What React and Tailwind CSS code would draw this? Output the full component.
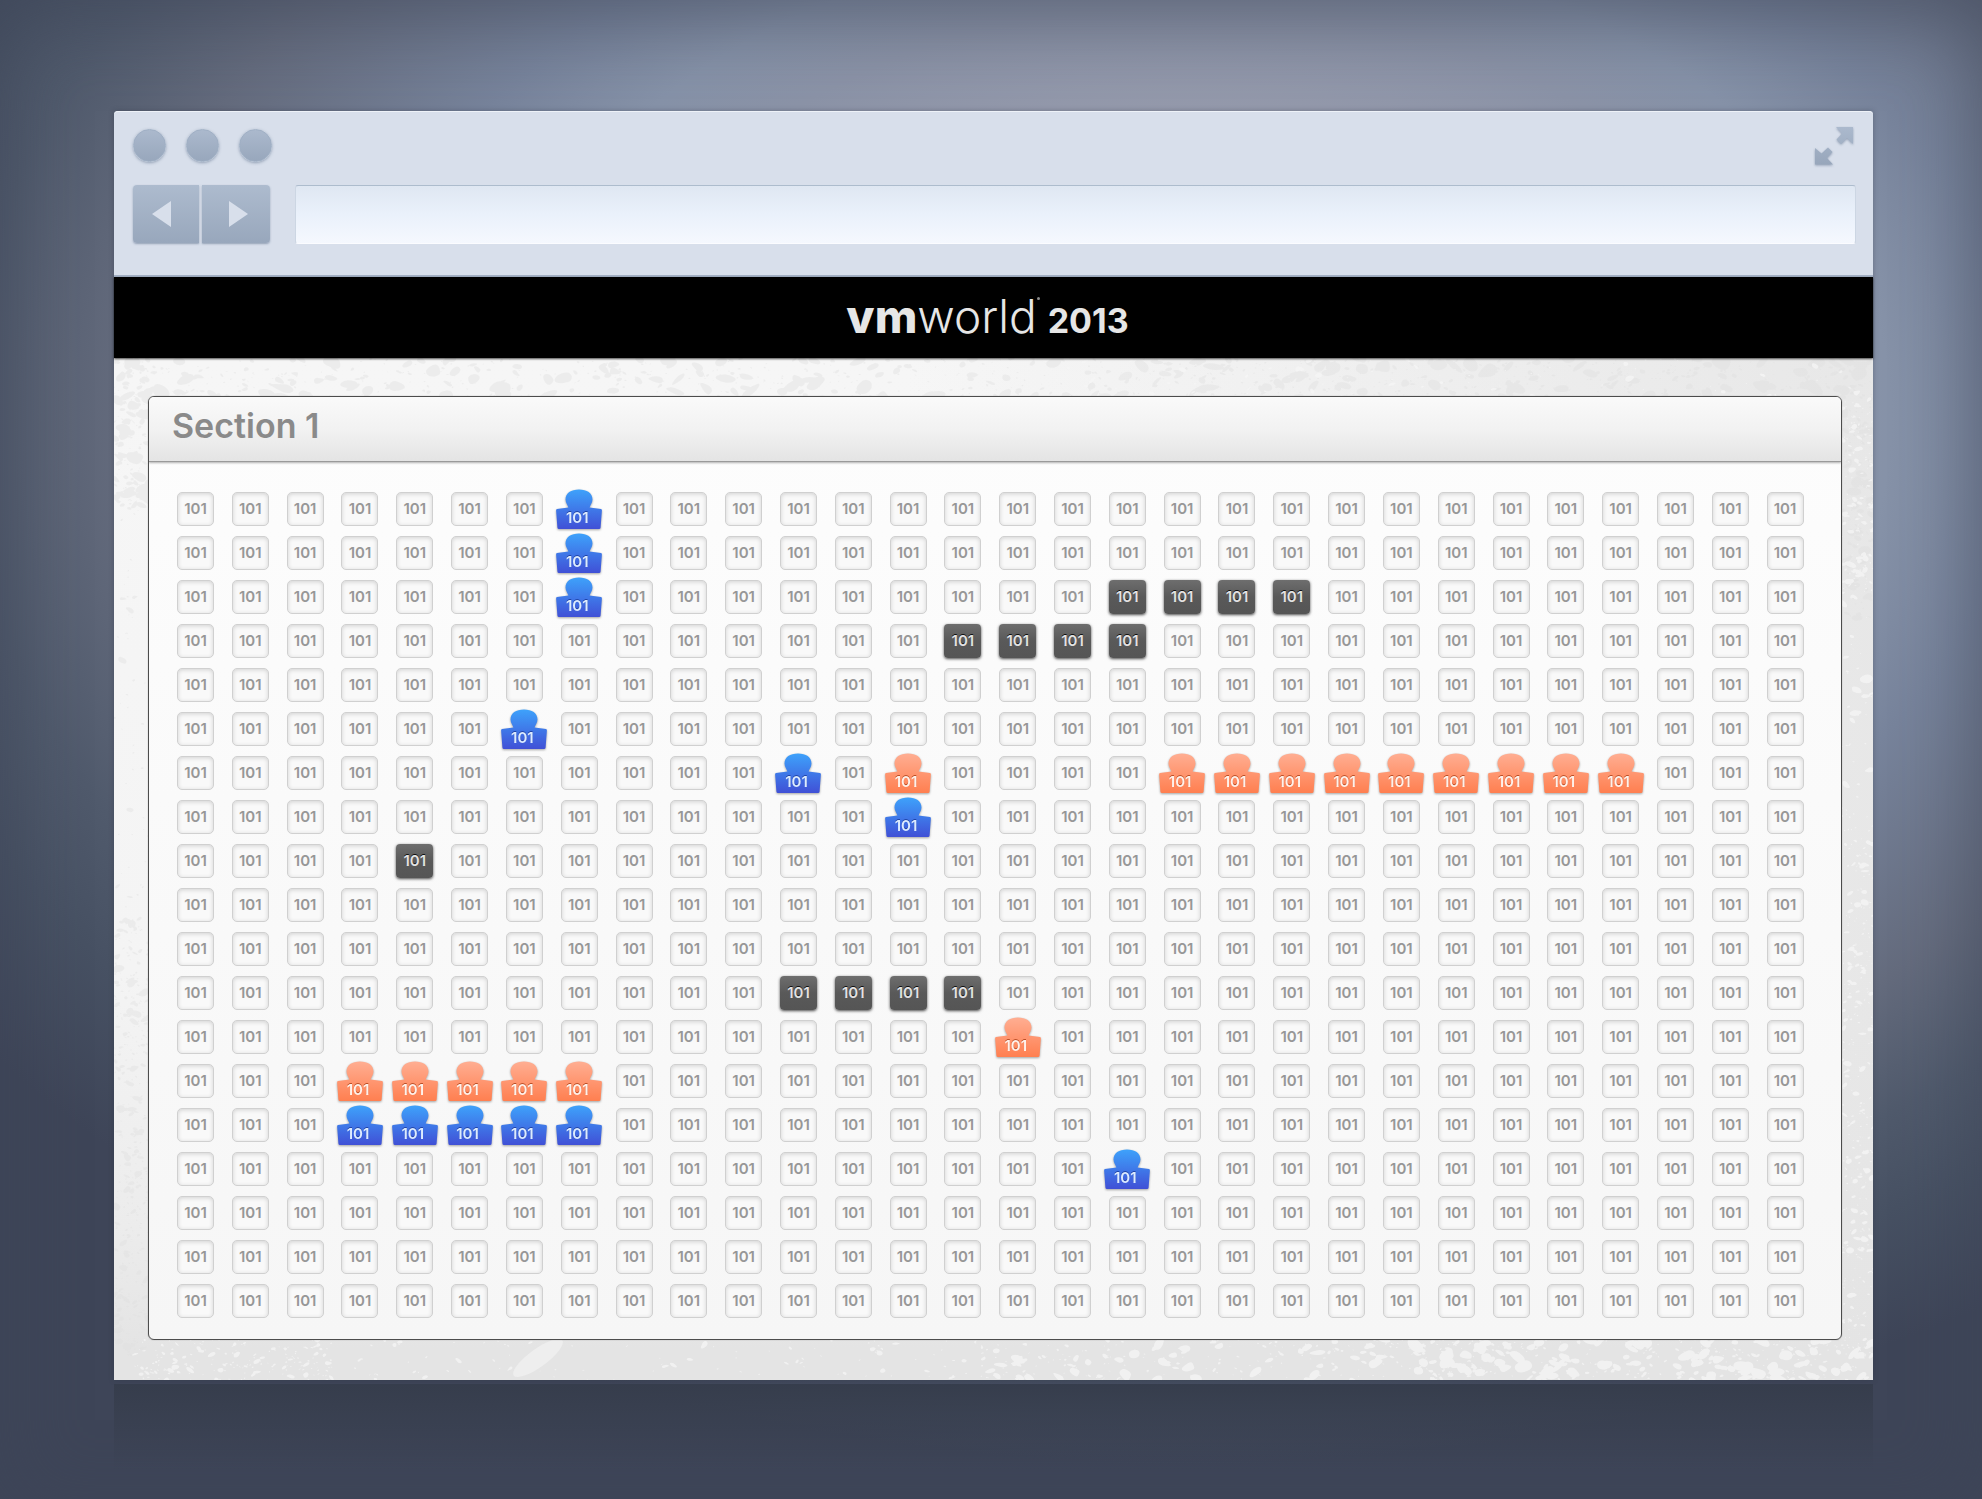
const COLS = 30;
const ROWS = 19;

const PLACED = {};
function place(kind, row, cols) {
  cols.forEach((c) => {
    PLACED[row + "-" + c] = kind;
  });
}
place("mine", 0, [7]);
place("mine", 1, [7]);
place("mine", 2, [7]);
place("blocked", 2, [17, 18, 19, 20]);
place("blocked", 3, [14, 15, 16, 17]);
place("mine", 5, [6]);
place("mine", 6, [11]);
place("taken", 6, [13, 18, 19, 20, 21, 22, 23, 24, 25, 26]);
place("mine", 7, [13]);
place("blocked", 8, [4]);
place("blocked", 11, [11, 12, 13, 14]);
place("taken", 12, [15]);
place("taken", 13, [3, 4, 5, 6, 7]);
place("mine", 14, [3, 4, 5, 6, 7]);
place("mine", 15, [17]);

function makeRandom(seed) {
  let s = seed;
  return () => {
    s = (s * 16807) % 2147483647;
    return s / 2147483647;
  };
}

// Irregular stone chips scattered in the margin around the panel.
function makeChips() {
  const rnd = makeRandom(4127);
  const light = [];
  const dark = [];
  const add = (list, x, y, size) => {
    const turn = (rnd() - 0.5) * 1.6;
    const flat = 0.35 + rnd() * 0.4;
    const n = 6;
    const pts = [];
    for (let i = 0; i < n; i++) {
      const a = (i / n) * Math.PI * 2;
      const r = size * (0.6 + rnd() * 0.6);
      const px = Math.cos(a) * r;
      const py = Math.sin(a) * r * flat;
      pts.push([
        x + px * Math.cos(turn) - py * Math.sin(turn),
        y + px * Math.sin(turn) + py * Math.cos(turn),
      ]);
    }
    const mid = (p, q) => [(p[0] + q[0]) / 2, (p[1] + q[1]) / 2];
    const f = (p) => p[0].toFixed(1) + " " + p[1].toFixed(1);
    let d = "M" + f(mid(pts[n - 1], pts[0]));
    for (let i = 0; i < n; i++) d += "Q" + f(pts[i]) + " " + f(mid(pts[i], pts[(i + 1) % n]));
    list.push(d + "Z");
  };
  const size = (max) => 1 + Math.pow(rnd(), 4) * max;
  for (let i = 0; i < 900; i++) add(dark, 10 + rnd() * 1740, rnd() * 40, size(11));
  for (let i = 0; i < 110; i++) add(light, 900 + rnd() * 850, rnd() * 40, size(4));
  for (let i = 0; i < 200; i++) add(dark, rnd() * 36, rnd() * 150, size(9));
  for (let i = 0; i < 50; i++) add(dark, rnd() * 36, 150 + rnd() * 400, size(5));
  for (let i = 0; i < 420; i++) add(dark, rnd() * 36, 560 + rnd() * 440, size(6));
  for (let i = 0; i < 160; i++) add(dark, 1728 + rnd() * 32, rnd() * 260, size(8));
  for (let i = 0; i < 160; i++) add(light, 1728 + rnd() * 32, 40 + rnd() * 200, size(4));
  for (let i = 0; i < 40; i++) add(light, 1728 + rnd() * 32, 200 + rnd() * 250, size(8));
  for (let i = 0; i < 330; i++) add(light, 1728 + rnd() * 32, 450 + rnd() * 550, size(4));
  for (let i = 0; i < 240; i++) add(light, 860 + rnd() * 500, 982 + rnd() * 42, size(8));
  for (let i = 0; i < 400; i++) add(light, 1300 + rnd() * 460, 982 + rnd() * 42, size(10));
  for (let i = 0; i < 200; i++) add(light, 20 + rnd() * 200, 982 + rnd() * 42, size(4));
  for (let i = 0; i < 110; i++) add(light, 240 + rnd() * 660, 982 + rnd() * 42, size(4));
  return { light: light.join(""), dark: dark.join("") };
}
const CHIPS = makeChips();

function StoneTexture() {
  return (
    <svg
      className="absolute inset-0 h-full w-full"
      viewBox="0 0 1759 1022"
      preserveAspectRatio="none"
      aria-hidden="true"
    >
      <path d={CHIPS.dark} fill="#dedede" fillOpacity="0.4" />
      <path d={CHIPS.light} fill="#f6f6f6" fillOpacity="0.75" />
      <ellipse cx="424" cy="1000" rx="30" ry="9" fill="#eeeeee" transform="rotate(-36 424 1000)" />
    </svg>
  );
}

function PersonShape({ fill }) {
  return (
    <svg className="absolute inset-0 h-full w-full" viewBox="0 0 46 41" aria-hidden="true">
      <path
        d="M23 0.5C31 0.5 36.500 4 36.500 10.500C36.500 14 34 16.500 33.600 18.500L45 20Q46 20.300 45.900 21.500L44.600 38.500Q44.500 40 43 40H3Q1.500 40 1.400 38.500L0.100 21.500Q0 20.300 1 20L12.400 18.500C12 16.500 9.500 14 9.500 10.500C9.500 4 15 0.500 23 0.500Z"
        fill={fill}
      />
    </svg>
  );
}

function Seat({ kind, label }) {
  if (kind === "mine" || kind === "taken") {
    return (
      <button
        type="button"
        aria-label={label}
        className="relative -mx-1 -mt-1 -mb-1 flex h-[41px] w-[46px] items-end justify-center self-center justify-self-center pr-1 pb-1 drop-shadow-[0_1px_1px_rgba(0,0,0,0.35)]"
      >
        <PersonShape fill={kind === "mine" ? "url(#seat-mine)" : "url(#seat-taken)"} />
        <span
          className={
            kind === "mine"
              ? "relative text-[15px] leading-4 font-semibold text-[#dcebff] [text-shadow:0_-1px_0_rgba(20,50,140,0.7)]"
              : "relative text-[15px] leading-4 font-semibold text-[#fff1ea] [text-shadow:0_-1px_0_rgba(160,50,10,0.7)]"
          }
        >
          101
        </span>
      </button>
    );
  }
  if (kind === "blocked") {
    return (
      <button
        type="button"
        disabled
        className="h-[34px] w-[37px] rounded-[4px] bg-gradient-to-b from-[#6e6e6e] via-[#595959] to-[#555555] text-[15px] leading-8 font-semibold text-[#e2e2e2] shadow-[0_1px_3px_rgba(0,0,0,0.7)] [text-shadow:0_-1px_0_#111]"
      >
        101
      </button>
    );
  }
  return (
    <button
      type="button"
      className="h-[34px] w-[37px] rounded-[5px] border border-[#d0d0d0] bg-[#f9f9f9] text-[15px] leading-8 font-semibold text-[#979797] shadow-[inset_0_1px_4px_rgba(0,0,0,0.16)]"
    >
      101
    </button>
  );
}

function Gradients() {
  return (
    <svg className="absolute h-0 w-0" aria-hidden="true">
      <defs>
        <linearGradient id="seat-mine" x1="0" y1="0" x2="0" y2="1">
          <stop offset="0" stopColor="#3ea2fb" />
          <stop offset="1" stopColor="#4050d6" />
        </linearGradient>
        <linearGradient id="seat-taken" x1="0" y1="0" x2="0" y2="1">
          <stop offset="0" stopColor="#ffae92" />
          <stop offset="1" stopColor="#ff7f50" />
        </linearGradient>
        <linearGradient id="chrome-icon" x1="0" y1="0" x2="0" y2="1">
          <stop offset="0" stopColor="#abb9cd" />
          <stop offset="1" stopColor="#97a6bb" />
        </linearGradient>
      </defs>
    </svg>
  );
}

function BrowserBar() {
  return (
    <header className="rounded-t-[4px] border-b-2 border-[#a3b0c4] bg-[#d8dfeb] pt-4 pr-[17px] pb-[31px] pl-[19px] shadow-[inset_0_1px_0_#eef2f8]">
      <div className="flex h-[58px] items-start justify-between">
        <div className="flex gap-5 pt-0.5">
          {["Close", "Minimise", "Zoom"].map((name) => (
            <button
              key={name}
              type="button"
              aria-label={name}
              className="size-[33px] rounded-full border border-[#9fafc4] bg-gradient-to-b from-[#abb9cd] to-[#98a7bc] shadow-[0_1px_3px_rgba(80,100,130,0.5)]"
            />
          ))}
        </div>
        <button type="button" aria-label="Full screen" className="mr-0.5 drop-shadow-[0_1px_1px_rgba(80,100,130,0.5)]">
          <svg className="h-[38px] w-[39px]" viewBox="0 0 39 38" fill="url(#chrome-icon)">
            <path d="M21 0H38V17L32 11L26 17L21.500 12.500L27 6.500ZM0 21L6.500 26.500L13 20.500L17.500 25L12 31L18 37.500H0Z" />
          </svg>
        </button>
      </div>
      <div className="flex gap-[25px]">
        <div className="flex h-[58px] gap-[3px]">
          <button
            type="button"
            aria-label="Back"
            className="flex w-[66px] items-center justify-center rounded-l-[4px] bg-gradient-to-b from-[#adbbce] to-[#98a7bc] pr-2.5 shadow-[0_1px_2px_rgba(80,100,130,0.5)]"
          >
            <svg className="h-[26px] w-[19px]" viewBox="0 0 19 26" fill="#d8dfeb">
              <path d="M19 0V26L0 13Z" />
            </svg>
          </button>
          <button
            type="button"
            aria-label="Forward"
            className="flex w-[68px] items-center justify-center rounded-r-[4px] bg-gradient-to-b from-[#adbbce] to-[#98a7bc] pl-1 shadow-[0_1px_2px_rgba(80,100,130,0.5)]"
          >
            <svg className="h-[26px] w-[19px]" viewBox="0 0 19 26" fill="#d8dfeb">
              <path d="M0 0V26L19 13Z" />
            </svg>
          </button>
        </div>
        <input
          type="text"
          aria-label="Address"
          className="h-[59px] min-w-0 flex-1 rounded-[3px] border border-t-[#adbccd] border-r-[#ccd6e3] border-b-[#fbfcff] border-l-[#ccd6e3] bg-gradient-to-b from-[#dfe7f2] via-[#eaf1fb] to-[#f5f8fe] px-4 text-2xl text-slate-600 outline-none"
        />
      </div>
    </header>
  );
}

export default function App() {
  return (
    <div className="min-h-screen bg-[radial-gradient(1300px_900px_at_60%_28%,#9a9fb2_0%,#959aac_34%,#8b93a7_46%,#8692a8_54%,#77839b_64%,#646b7d_82%,#505a6c_94%,#475163_103%,#3e4558_116%)] px-[109px] pt-[111px] pl-[114px] font-['Inter',sans-serif] shadow-[inset_0_16px_80px_rgba(62,69,88,0.65)]">
      <Gradients />
      <div className="shadow-[0_0_5px_rgba(40,48,66,0.35)]">
        <BrowserBar />
        <div className="relative z-10 flex h-[81px] items-center justify-center bg-black shadow-[0_1px_2px_rgba(0,0,0,0.7)]">
          <h1 className="flex items-baseline pr-3 pb-1 text-[#e6e6e6]">
            <span className="text-[46px] leading-none font-extrabold">vm</span>
            <span className="text-[46px] leading-none font-light">world</span>
            <span className="mt-1 size-[3px] self-start rounded-full bg-[#8a8a8a]" />
            <span className="ml-2 text-[34px] leading-none font-bold">2013</span>
          </h1>
        </div>
        <main className="relative bg-[linear-gradient(to_right,rgba(228,228,228,0)_45%,rgba(228,228,228,0.8)_100%),linear-gradient(to_bottom,#f6f6f6_0%,#f4f4f4_60%,#ececec_85%,#e4e4e4_97%)] pt-[38px] pr-[31px] pb-10 pl-[34px]">
          <StoneTexture />
          <section
            aria-labelledby="section-title"
            className="relative overflow-hidden rounded-[6px] border border-[#4c4c4c] bg-gradient-to-b from-[#fdfdfd] to-[#f6f6f6] shadow-[0_0_1px_rgba(0,0,0,0.5)]"
          >
            <div className="flex h-[65px] items-center border-b border-[#9a9a9a] bg-gradient-to-b from-[#fafafa] via-[#f2f2f2] to-[#e4e4e4] px-[23px] pb-1.5 shadow-[0_1px_2px_rgba(0,0,0,0.3)]">
              <h2 id="section-title" className="text-[34px] leading-10 font-semibold text-[#8a8a8a]">
                Section 1
              </h2>
            </div>
            <div className="flex flex-col gap-2.5 pt-[30px] pr-[37px] pb-[21px] pl-7">
              {Array.from({ length: ROWS }, (_, r) => (
                <div key={r} className="grid h-[34px] grid-cols-[repeat(30,37px)] justify-between">
                  {Array.from({ length: COLS }, (_, c) => (
                    <Seat key={c} kind={PLACED[r + "-" + c]} label={"Seat 101, row " + (r + 1)} />
                  ))}
                </div>
              ))}
            </div>
          </section>
        </main>
      </div>
      <div className="mt-1 h-[115px] bg-gradient-to-b from-[#363d4c] to-transparent to-75%" />
    </div>
  );
}
